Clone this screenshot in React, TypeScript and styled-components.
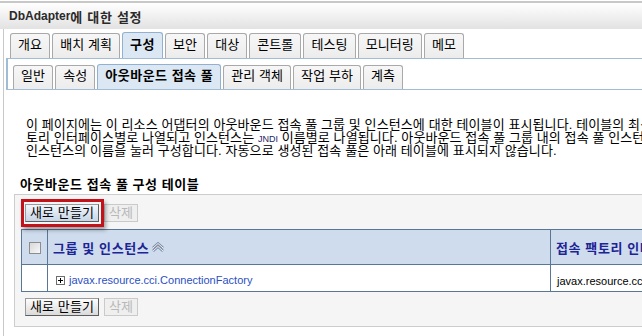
import React from 'react';
import styled, { createGlobalStyle } from 'styled-components';

const GlobalStyle = createGlobalStyle`
  html, body {
    margin: 0;
    padding: 0;
    background: #fff;
    overflow: hidden;
  }
  body {
    font-family: "Liberation Sans", "Noto Sans CJK KR", sans-serif;
    font-size: 13px;
    letter-spacing: 0.1px;
    color: #000;
  }
`;

const topTabs = ['개요', '배치 계획', '구성', '보안', '대상', '콘트롤', '테스팅', '모니터링', '메모'];
const subTabs = ['일반', '속성', '아웃바운드 접속 풀', '관리 객체', '작업 부하', '계측'];

const SortIcon = () => (
  <svg width="14" height="10" viewBox="0 0 14 10">
    <polyline points="2,6 7,1.5 12,6" fill="none" stroke="#7d8ca4" strokeWidth="2.6" />
    <polyline points="2,9 7,4.5 12,9" fill="none" stroke="#7d8ca4" strokeWidth="2.6" />
    <polyline points="2,6 7,1.5 12,6" fill="none" stroke="#fff" strokeWidth="0.9" />
    <polyline points="2,9 7,4.5 12,9" fill="none" stroke="#fff" strokeWidth="0.9" />
  </svg>
);

const ExpandIcon = () => (
  <svg width="9" height="9" viewBox="0 0 9 9">
    <rect x="0.5" y="0.5" width="8" height="8" fill="#fff" stroke="#6e6e6e" />
    <line x1="2" y1="4.5" x2="7" y2="4.5" stroke="#000" />
    <line x1="4.5" y1="2" x2="4.5" y2="7" stroke="#000" />
  </svg>
);

const Buttons = ({ highlight }: { highlight?: boolean }) => (
  <ButtonRow>
    {highlight ? (
      <Annotated>
        <Button $focused>새로 만들기</Button>
      </Annotated>
    ) : (
      <Button>새로 만들기</Button>
    )}
    <Button disabled>삭제</Button>
  </ButtonRow>
);

const App = () => {
  return (
    <Page>
      <GlobalStyle />
      <TitleBar>
        DbAdapter<TitleKo>에 대한 설정</TitleKo>
      </TitleBar>
      <Content>
        <TabRow>
          {topTabs.map((t) => (
            <Tab key={t} $active={t === '구성'}>
              {t}
            </Tab>
          ))}
        </TabRow>
        <SubTabBox>
          {subTabs.map((t) => (
            <SubTab key={t} $active={t === '아웃바운드 접속 풀'}>
              {t}
            </SubTab>
          ))}
        </SubTabBox>
        <Description>
          <Line>
            이 페이지에는 이 리소스 어댑터의 아웃바운드 접속 풀 그룹 및 인스턴스에 대한 테이블이 표시됩니다. 테이블의 최상위 레벨에는 접속 팩
          </Line>
          <Line>
            토리 인터페이스별로 나열되고 인스턴스는 <Small>JNDI</Small> 이름별로 나열됩니다. 아웃바운드 접속 풀 그룹 내의 접속 풀 인스턴스를 구성하려면
          </Line>
          <Line>인스턴스의 이름을 눌러 구성합니다. 자동으로 생성된 접속 풀은 아래 테이블에 표시되지 않습니다.</Line>
        </Description>
        <SectionTitle>아웃바운드 접속 풀 구성 테이블</SectionTitle>
        <Panel>
          <Buttons highlight />
          <Table>
            <colgroup>
              <col style={{ width: 26 }} />
              <col style={{ width: 503 }} />
              <col />
            </colgroup>
            <thead>
              <tr>
                <HeadCell $center>
                  <CheckBox />
                </HeadCell>
                <HeadCell>
                  <HeadLabel>
                    그룹 및 인스턴스
                    <SortIcon />
                  </HeadLabel>
                </HeadCell>
                <HeadCell>접속 팩토리 인터페이스</HeadCell>
              </tr>
            </thead>
            <tbody>
              <tr>
                <Cell />
                <Cell>
                  <TreeItem>
                    <ExpandIcon />
                    <Link>javax.resource.cci.ConnectionFactory</Link>
                  </TreeItem>
                </Cell>
                <Cell>
                  <Plain>javax.resource.cci.ConnectionFactory</Plain>
                </Cell>
              </tr>
            </tbody>
          </Table>
          <BottomButtons>
            <Buttons />
          </BottomButtons>
        </Panel>
      </Content>
    </Page>
  );
};

const Page = styled.div`
  width: 900px;
`;

const TitleBar = styled.div`
  margin-top: 1px;
  height: 26px;
  border-top: 2px solid #c8c8c8;
  background: linear-gradient(#ffffff, #e2e2e2);
  padding-left: 9px;
  display: flex;
  align-items: center;
  font-weight: bold;
  font-size: 12px;
  letter-spacing: 0;
  color: #2a2a2a;
`;

const TitleKo = styled.span`
  font-size: 13px;
  letter-spacing: 0.7px;
`;

const Content = styled.div`
  margin-left: 3px;
  border-left: 1px solid #c9c9c9;
  min-height: 310px;
`;

const TabRow = styled.div`
  display: flex;
  align-items: flex-end;
  gap: 2px;
  padding: 3px 0 0 6px;
`;

const Tab = styled.div<{ $active?: boolean }>`
  box-sizing: border-box;
  height: ${({ $active }) => ($active ? '26px' : '25px')};
  padding: ${({ $active }) => ($active ? '4px 7px 0' : '3px 7px 0')};
  border: 1px solid ${({ $active }) => ($active ? '#92b0cf' : '#a9a9a9')};
  border-bottom: none;
  border-radius: 3px 3px 0 0;
  background: ${({ $active }) => ($active ? '#dbe7f3' : 'linear-gradient(#f7f7f7, #ececec)')};
  font-weight: ${({ $active }) => ($active ? 'bold' : 'normal')};
  letter-spacing: ${({ $active }) => ($active ? '0.5px' : '0.1px')};
  line-height: 16px;
  white-space: nowrap;
`;

const SubTabBox = styled.div`
  margin-left: 2px;
  border: 1px solid #a3bcd6;
  border-left-width: 2px;
  border-right: none;
  padding: 5px 0 0 5px;
  display: flex;
  align-items: flex-end;
  gap: 2px;
`;

const SubTab = styled(Tab)`
  height: ${({ $active }) => ($active ? '25px' : '24px')};
  padding-top: ${({ $active }) => ($active ? '3px' : '2px')};
`;

const Description = styled.div`
  margin-top: 28px;
  padding-left: 22px;
  line-height: 13px;
`;

const Line = styled.div`
  white-space: nowrap;
  height: 13px;
`;

const Small = styled.span`
  font-size: 9px;
  line-height: 9px;
  letter-spacing: 0;
  color: #1c2566;
`;

const SectionTitle = styled.div`
  margin-top: 21px;
  padding-left: 16px;
  font-weight: bold;
  letter-spacing: 0.55px;
  line-height: 13px;
`;

const Panel = styled.div`
  margin: 3px 0 0 10px;
  border: 1px solid #cdcdcd;
  border-right: none;
  background: #f5f5f5;
  padding: 9px 0 10px 6px;
`;

const ButtonRow = styled.div`
  display: flex;
  gap: 5px;
  padding-left: 4px;
`;

const BottomButtons = styled.div`
  margin-top: 6px;
`;

const Annotated = styled.span`
  position: relative;
  display: inline-flex;
  &::after {
    content: '';
    position: absolute;
    top: -5px;
    left: -4px;
    right: -5px;
    bottom: -5px;
    border: 3px solid #c4121b;
    box-shadow: 2px 3px 4px rgba(0, 0, 0, 0.35);
    pointer-events: none;
  }
`;

const Button = styled.button<{ $focused?: boolean }>`
  box-sizing: border-box;
  height: 18px;
  margin: 0;
  padding: 0 4px;
  font-family: "Liberation Sans", "Noto Sans CJK KR", sans-serif;
  font-size: 13px;
  letter-spacing: 0.1px;
  line-height: 14px;
  color: #000;
  border: 1px solid;
  border-color: #9a9a9a #5e5e5e #5e5e5e #9a9a9a;
  background: ${({ $focused }) =>
    $focused ? 'linear-gradient(#f2f6fb, #c7d5e6)' : 'linear-gradient(#fdfdfd, #dadada)'};
  &:disabled {
    color: #b8b8b8;
    border-color: #cacaca;
    background: #efefef;
  }
`;

const Table = styled.table`
  margin-top: 7px;
  width: 880px;
  border-collapse: collapse;
  border: 1px solid #5a7697;
  background: #fff;
  table-layout: fixed;
`;

const HeadCell = styled.th<{ $center?: boolean }>`
  height: 34px;
  padding: 0 0 0 ${({ $center }) => ($center ? '0' : '5px')};
  border: 1px solid #5a7697;
  background: #cfdcee;
  color: #1d2494;
  font-size: 13px;
  font-weight: bold;
  letter-spacing: 0.6px;
  text-align: ${({ $center }) => ($center ? 'center' : 'left')};
  vertical-align: middle;
  white-space: nowrap;
  overflow: hidden;
`;

const HeadLabel = styled.span`
  display: inline-flex;
  align-items: center;
  gap: 2px;
`;

const CheckBox = styled.span`
  display: inline-block;
  box-sizing: border-box;
  width: 12px;
  height: 12px;
  vertical-align: middle;
  border: 1px solid #8d8d8d;
  background: linear-gradient(135deg, #d8d8d8, #f8f8f8);
`;

const Cell = styled.td`
  height: 22px;
  padding: 4px 0 0 6px;
  border: 1px solid #5a7697;
  vertical-align: middle;
  white-space: nowrap;
  overflow: hidden;
`;

const TreeItem = styled.span`
  display: inline-flex;
  align-items: center;
  gap: 4px;
  padding-left: 2px;
`;

const Link = styled.span`
  font-size: 11px;
  letter-spacing: 0;
  color: #2b4fbf;
`;

const Plain = styled.span`
  font-size: 11px;
  letter-spacing: 0;
  color: #000;
`;

export default App;
